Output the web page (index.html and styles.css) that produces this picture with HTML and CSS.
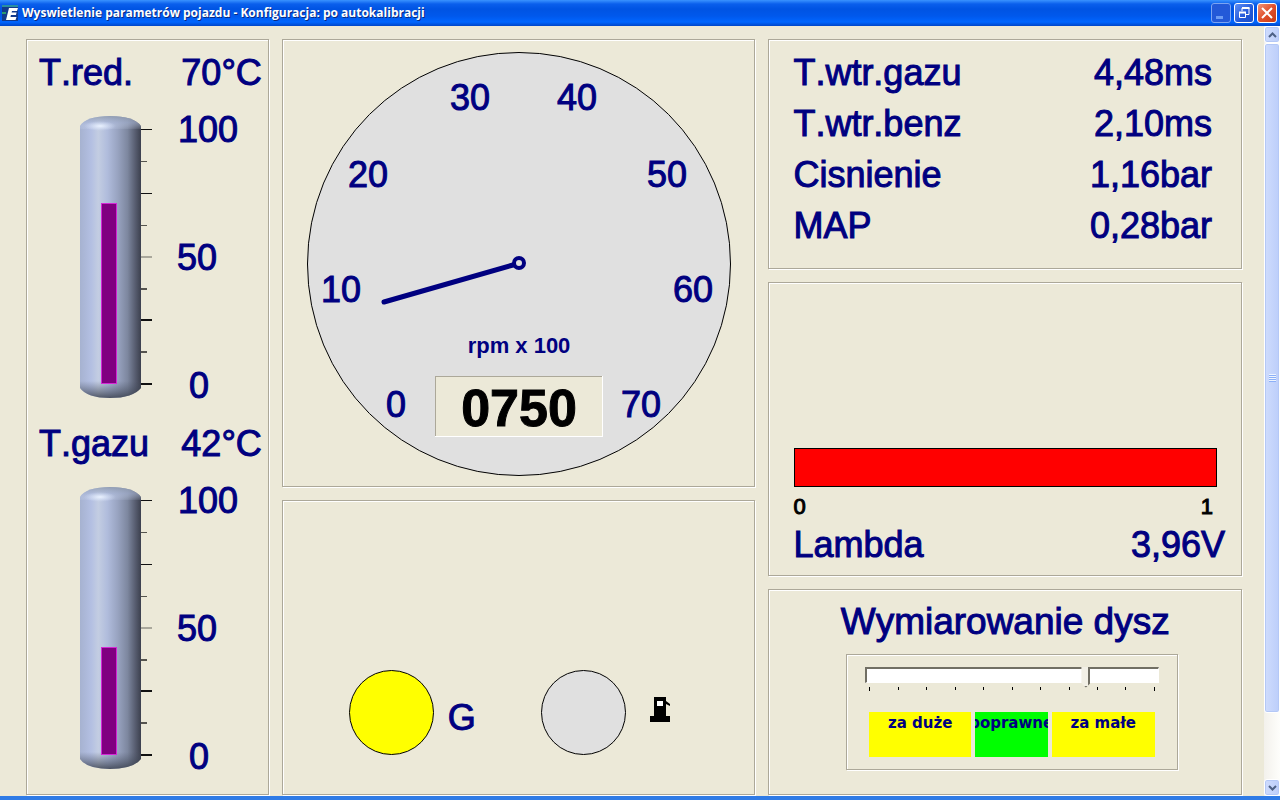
FILE: index.html
```
<!DOCTYPE html>
<html lang="pl">
<head>
  <meta charset="UTF-8">
  <title>Wyswietlenie parametrów pojazdu</title>
  <link rel="stylesheet" href="styles.css">
</head>
<body>
  <!-- Title bar -->
  <header class="titlebar">
    <svg class="app-icon" width="16" height="16" viewBox="0 0 16 16">
      <rect width="16" height="16" fill="#123a8c"/>
      <path d="M0 0h16v2H0z" fill="#2a8fa0"/>
      <path d="M0 7h4v2H0z" fill="#2a9a70"/>
      <path d="M7 3h9l-1 3h-5l-.4 1.500h5l-.7 2.500h-5L8.500 12h6l-1 3H4z" fill="#fff"/>
    </svg>
    <h1>Wyswietlenie parametrów pojazdu - Konfiguracja: po autokalibracji</h1>
    <button class="win-btn inactive" aria-label="Minimalizuj">
      <svg width="18" height="18" viewBox="0 0 18 18"><path d="M4 12h7v3H4z" fill="#6c9cf4"/></svg>
    </button>
    <button class="win-btn" aria-label="Przywróć">
      <svg width="18" height="18" viewBox="0 0 18 18" fill="none" stroke="#fff">
        <path d="M7 7V4h7v6.500h-3"/>
        <path d="M7 4h7.500M4 8.500h7" stroke-width="2"/>
        <path d="M4.500 8v5.500h6V8"/>
      </svg>
    </button>
    <button class="win-btn close" aria-label="Zamknij">
      <svg width="18" height="18" viewBox="0 0 18 18"><path d="M4 4l10 10M14 4L4 14" stroke="#fff" stroke-width="2"/></svg>
    </button>
  </header>

  <div class="window">
    <main class="content">

      <!-- Temperatures -->
      <section class="panel temps">
        <h2 class="row"><span>T.red.</span><span>70°C</span></h2>
        <svg class="thermo" width="170" height="327" viewBox="0 2 170 327">
          <defs>
            <linearGradient id="tube" x1="0" x2="1" y1="0" y2="0">
              <stop offset="0" stop-color="#a6b2d0"/>
              <stop offset=".18" stop-color="#b3bfe2"/>
              <stop offset=".3" stop-color="#c3cde2"/>
              <stop offset=".45" stop-color="#b0bcdc"/>
              <stop offset=".62" stop-color="#98a3c0"/>
              <stop offset=".78" stop-color="#7d879f"/>
              <stop offset=".9" stop-color="#595f72"/>
              <stop offset="1" stop-color="#3c404e"/>
            </linearGradient>
            <linearGradient id="capTop" x1="0" x2="0" y1="0" y2="1">
              <stop offset="0" stop-color="#8c98aa" stop-opacity=".8"/>
              <stop offset=".5" stop-color="#a9b6d4" stop-opacity=".6"/>
              <stop offset="1" stop-color="#d4dff6" stop-opacity=".1"/>
            </linearGradient>
            <linearGradient id="capBottom" x1="0" x2="0" y1="0" y2="1">
              <stop offset="0" stop-color="#4a5264" stop-opacity="0"/>
              <stop offset="1" stop-color="#343a46" stop-opacity=".8"/>
            </linearGradient>
            <radialGradient id="shine">
              <stop offset="0" stop-color="#eaf2ff"/>
              <stop offset="1" stop-color="#d4dff6" stop-opacity="0"/>
            </radialGradient>
            <g id="scale">
              <path d="M0 36V33Q6 23 30 23T61 33V295Q53 305 30 305T0 295z" fill="url(#tube)"/>
              <path d="M0 36V33Q6 23 30 23T61 33V36z" fill="url(#capTop)"/>
              <ellipse cx="20" cy="33" rx="16" ry="5" fill="url(#shine)"/>
              <path d="M0 288H61V295Q53 305 30 305T0 295z" fill="url(#capBottom)"/>
              <path d="M61 36h11v1H61zM61 100h11v1H61zM61 226h11v2H61zM61 290h11v2H61z" fill="#111"/>
              <path d="M61 163h11v2H61z" fill="#aaa89c"/>
              <path d="M61 68h6v1h-6zM61 132h6v1h-6zM61 195h6v2h-6zM61 258h6v2h-6z" fill="#55544e"/>
              <text x="98" y="49">100</text>
              <text x="97" y="177">50</text>
              <text x="109" y="305">0</text>
            </g>
          </defs>
          <use href="#scale"/>
          <rect class="level" x="21.500" y="110.500" width="15" height="180"/>
        </svg>

        <h2 class="row"><span>T.gazu</span><span>42°C</span></h2>
        <svg class="thermo" width="170" height="327" viewBox="0 2 170 327">
          <use href="#scale"/>
          <rect class="level" x="21.500" y="183.500" width="15" height="107"/>
        </svg>
      </section>

      <div class="column">
        <!-- Engine speed -->
        <section class="panel rpm">
          <svg width="426" height="426" viewBox="0 0 426 426">
            <circle cx="213" cy="213" r="211.500" fill="#e0e0e0" stroke="#000"/>
            <g class="marks">
              <text x="90" y="366">0</text>
              <text x="35" y="251">10</text>
              <text x="62" y="136">20</text>
              <text x="164" y="59">30</text>
              <text x="271" y="59">40</text>
              <text x="361" y="136">50</text>
              <text x="387" y="251">60</text>
              <text x="335" y="366">70</text>
            </g>
            <path d="M78 251L207 214" stroke="#000080" stroke-width="5" stroke-linecap="round"/>
            <circle cx="213" cy="212" r="5" fill="#e0e0e0" stroke="#000080" stroke-width="4"/>
            <text class="unit" x="213" y="302">rpm x 100</text>
            <rect x="129" y="325" width="168" height="61" fill="#fff"/>
            <rect x="129" y="325" width="167" height="60" fill="#aca899"/>
            <rect x="130" y="326" width="166" height="59" fill="#ece9d8"/>
            <text class="lcd" x="213" y="375">0750</text>
          </svg>
        </section>

        <!-- Fuel lamps -->
        <section class="panel lamps">
          <span class="lamp on"></span>
          <span class="gas">G</span>
          <span class="lamp"></span>
          <svg class="pump" width="20" height="25" viewBox="0 0 20 25">
            <path fill-rule="evenodd" d="M4 0H16V4L20 7V9L16 7V19H20V25H0V19H4zM7 4V9H13V4z" fill="#000"/>
            <path d="M7 4H13V9H7z" fill="#fff"/>
          </svg>
        </section>
      </div>

      <div class="column">
        <!-- Readings -->
        <section class="panel readings">
          <table>
            <tr><th scope="row">T.wtr.gazu</th><td>4,48ms</td></tr>
            <tr><th scope="row">T.wtr.benz</th><td>2,10ms</td></tr>
            <tr><th scope="row">Cisnienie</th><td>1,16bar</td></tr>
            <tr><th scope="row">MAP</th><td>0,28bar</td></tr>
          </table>
        </section>

        <!-- Lambda -->
        <section class="panel lambda">
          <div class="bar"></div>
          <div class="bar-scale"><span>0</span><span>1</span></div>
          <h2 class="row"><span>Lambda</span><span>3,96V</span></h2>
        </section>

        <!-- Nozzle size -->
        <section class="panel nozzles">
          <h2><label for="nozzle">Wymiarowanie dysz</label></h2>
          <div class="panel sizing">
            <input type="range" id="nozzle" min="0" max="100" value="76">
            <div class="ticks"><i></i><i></i><i></i><i></i><i></i><i></i><i></i><i></i><i></i><i></i><i></i></div>
            <div class="zones">
              <span class="zone">za duże</span>
              <span class="zone ok">poprawne</span>
              <span class="zone">za małe</span>
            </div>
          </div>
        </section>
      </div>
    </main>

    <!-- Scroll bar -->
    <div class="scrollbar">
      <button class="arrow" aria-label="W górę">
        <svg width="9" height="6" viewBox="0 0 9 6"><path d="M1 5l3.500-3.500L8 5" fill="none" stroke="#4d6185" stroke-width="2"/></svg>
      </button>
      <div class="thumb"><span class="grip"></span></div>
      <button class="arrow" aria-label="W dół">
        <svg width="9" height="6" viewBox="0 0 9 6"><path d="M1 1l3.500 3.500L8 1" fill="none" stroke="#4d6185" stroke-width="2"/></svg>
      </button>
    </div>
  </div>
</body>
</html>
```
FILE: styles.css
```
* {
  box-sizing: border-box;
}
body {
  margin: 0;
  min-height: 100vh;
  display: flex;
  flex-direction: column;
  background: #ece9d8;
  color: #000080;
  font-family: "Liberation Sans", Arial, sans-serif;
  font-size: 36px;
  font-kerning: none;
  line-height: 42px;
  border-bottom: 4px solid #2f7be6;
}
h1, h2 {
  margin: 0;
  font-size: inherit;
  font-weight: normal;
}
button {
  padding: 0;
  border: none;
  display: flex;
  align-items: center;
  justify-content: center;
}

/* title bar */
.titlebar {
  display: flex;
  align-items: center;
  height: 26px;
  padding: 0 3px 0 2px;
  gap: 3px;
  background: linear-gradient(#3a93ff 0, #0a5fec 4px, #0054e3 9px, #0058ec 16px, #0066ff 22px, #0046c8 26px);
}
.titlebar h1 {
  flex: 1;
  padding-left: 1px;
  color: #fff;
  font: bold 12px/26px "Open Sans", sans-serif;
  text-shadow: 1px 1px 0 #0a2a80;
}
.win-btn {
  width: 20px;
  height: 20px;
  border: 1px solid #fff;
  border-radius: 3px;
  background: linear-gradient(135deg, #5f8ff5, #2157d8 60%, #1c50c8);
}
.win-btn.inactive {
  border-color: #7ba4f2;
  background: #2359d8;
}
.win-btn.close {
  background: linear-gradient(135deg, #f0947a, #e0502c 50%, #c83a14);
}

/* panels */
.window {
  flex: 1;
  display: flex;
}
.content {
  flex: 1;
  display: grid;
  grid-template-columns: 243fr 474fr 474fr;
  gap: 13px;
  padding: 13px 22px 1px 26px;
  -webkit-text-stroke: 1px #000080;
}
.column {
  display: flex;
  flex-direction: column;
  gap: 13px;
}
.panel {
  border: 1px solid #aca899;
  box-shadow: inset 1px 1px 0 #fff, 1px 1px 0 #fff;
}
.row {
  display: flex;
  justify-content: space-between;
  line-height: 44px;
}

/* temperatures */
.temps {
  padding: 11px 6px 0 12px;
}
.thermo {
  display: block;
  margin-left: 41px;
}
svg text {
  fill: #000080;
  stroke: #000080;
  stroke-width: 1px;
}
.level {
  fill: #800080;
  stroke: #d428d4;
}

/* engine speed */
.rpm {
  padding: 11px 0 9px;
}
.rpm svg {
  display: block;
  margin: 0 auto;
}
.rpm text {
  text-anchor: middle;
}
.rpm .unit {
  font-size: 22px;
  font-weight: bold;
  stroke: none;
}
.rpm .lcd {
  fill: #000;
  stroke: #000;
  font-size: 52px;
  font-weight: bold;
}

/* lamps */
.lamps {
  flex: 1;
  display: flex;
  align-items: flex-end;
  padding: 0 0 39px 66px;
}
.lamp {
  width: 85px;
  height: 85px;
  border: 1px solid #000;
  border-radius: 50%;
  background: #e0e0e0;
}
.lamp.on {
  background: #ff0;
}
.gas {
  width: 107px;
  padding: 0 0 16px 14px;
}
.pump {
  margin: 0 0 33px 24px;
}

/* readings */
.readings {
  padding: 7px 29px 17px 24px;
}
.readings table {
  width: 100%;
  border-collapse: collapse;
  line-height: 51px;
}
.readings th, .readings td {
  padding: 0;
  font-weight: normal;
  text-align: left;
}
.readings td {
  text-align: right;
}

/* lambda */
.lambda {
  padding: 165px 16px 8px 24px;
}
.bar {
  height: 39px;
  margin: 0 8px 0 1px;
  border: 1px solid #000;
  background: #f00;
}
.bar-scale {
  display: flex;
  justify-content: space-between;
  padding: 4px 12px 0 0;
  color: #000;
  font-size: 22px;
  line-height: 32px;
  -webkit-text-stroke: 1px #000;
}

/* nozzles */
.nozzles {
  flex: 1;
  text-align: center;
  padding: 11px 63px 0 77px;
}
.nozzles h2 {
  margin: 0 0 11px -14px;
  font-size: 37px;
}
.sizing {
  height: 116px;
  padding: 12px 18px;
}
.sizing input {
  -webkit-appearance: none;
  appearance: none;
  display: block;
  width: 100%;
  height: 16px;
  margin: 0;
  background: #fff;
  border: 1px solid #fff;
  border-top: 2px solid #716f64;
  border-left: 2px solid #716f64;
}
.sizing input::-webkit-slider-thumb {
  -webkit-appearance: none;
  width: 9px;
  height: 21px;
  margin-top: 3px;
  background: #f2f0e6;
  border-right: 2px solid #716f64;
  border-bottom: 2px solid #716f64;
  clip-path: polygon(0 0, 100% 0, 100% 80%, 50% 100%, 0 80%);
}
.ticks {
  display: flex;
  justify-content: space-between;
  padding: 4px 4px 0;
}
.ticks i {
  width: 1px;
  height: 3px;
  background: #000;
}
.ticks i:first-child, .ticks i:last-child {
  height: 4px;
}
.zones {
  display: grid;
  grid-template-columns: 102fr 73fr 104fr;
  gap: 4px;
  margin: 21px 4px 0;
  font: bold 15px/22px "DejaVu Sans", sans-serif;
  -webkit-text-stroke: 0;
}
.zone {
  display: flex;
  justify-content: center;
  height: 45px;
  min-width: 0;
  overflow: hidden;
  background: #ff0;
}
.zone.ok {
  background: #0f0;
}

/* scroll bar */
.scrollbar {
  width: 16px;
  display: flex;
  flex-direction: column;
  background: linear-gradient(90deg, #f3f1ec, #fefefb);
}
.arrow, .thumb {
  border: 1px solid #fff;
  border-radius: 3px;
  background: linear-gradient(90deg, #cfdcfd, #bccefa);
  box-shadow: inset 0 0 0 1px #b4c8f6;
}
.arrow {
  height: 17px;
}
.thumb {
  flex: 1;
  display: flex;
  align-items: center;
  justify-content: center;
  margin-bottom: 66px;
}
.grip {
  width: 7px;
  height: 8px;
  background: repeating-linear-gradient(#eef4fe 0, #eef4fe 1px, #8cb0f8 1px, #8cb0f8 2px);
}
```
